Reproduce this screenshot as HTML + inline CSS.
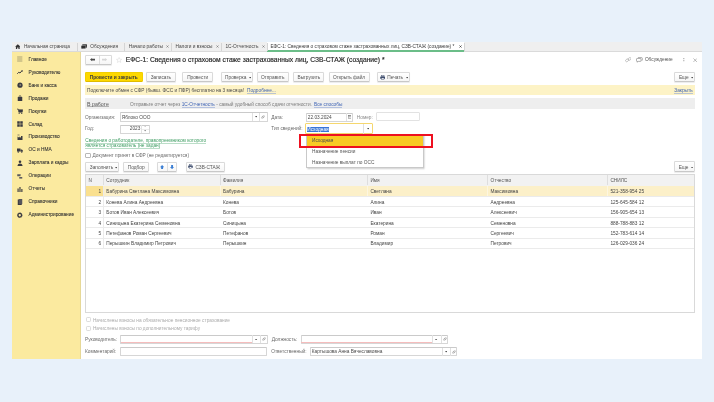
<!DOCTYPE html>
<html><head><meta charset="utf-8">
<style>
html,body{margin:0;padding:0}
body{width:714px;height:402px;overflow:hidden;background:#e8f1fa;position:relative;font-family:"Liberation Sans",sans-serif;color:#4a4a4a}
#root{position:absolute;left:0;top:0;width:714px;height:402px;will-change:transform}
.a{position:absolute}
.t{position:absolute;white-space:pre;font-size:4.78px;-webkit-text-stroke:0px}
.btn{position:absolute;box-sizing:border-box;border:0.7px solid #dadada;border-bottom-color:#c8c8c8;border-radius:1.2px;background:linear-gradient(#fff,#f6f6f6);box-shadow:0 0.6px 0.8px rgba(0,0,0,0.08)}
.inp{position:absolute;box-sizing:border-box;border:0.7px solid #d6d6d6;border-top-color:#cacaca;border-radius:1px;background:#fff}
</style></head><body><div id="root">
<div class="a" style="left:12.00px;top:42.00px;width:690.00px;height:317.20px;background:#fff;"></div>
<div class="a" style="left:12.00px;top:42.00px;width:690.00px;height:9.10px;background:#efefef;"></div>
<div class="a" style="left:12.00px;top:51.10px;width:690.00px;height:1.00px;background:#dadada;"></div>
<div class="a" style="left:267.40px;top:42.00px;width:196.90px;height:9.10px;background:#fff;"></div>
<div class="a" style="left:267.40px;top:50.00px;width:196.40px;height:1.60px;background:#6bbd88;"></div>
<div class="a" style="left:76.90px;top:43.00px;width:0.70px;height:8.00px;background:#d4d4d4;"></div>
<div class="a" style="left:124.20px;top:43.00px;width:0.70px;height:8.00px;background:#d4d4d4;"></div>
<div class="a" style="left:171.00px;top:43.00px;width:0.70px;height:8.00px;background:#d4d4d4;"></div>
<div class="a" style="left:221.00px;top:43.00px;width:0.70px;height:8.00px;background:#d4d4d4;"></div>
<div class="a" style="left:267.00px;top:43.00px;width:0.70px;height:8.00px;background:#d4d4d4;"></div>
<div class="a" style="left:463.80px;top:43.00px;width:0.70px;height:8.00px;background:#d4d4d4;"></div>
<svg class="a" style="left:14.80px;top:43.90px" width="5.6" height="5.2" viewBox="0 0 12 11"><path d="M6 0.3 L11.8 5.6 L10 5.6 L10 10.8 L7.3 10.8 L7.3 7.2 L4.7 7.2 L4.7 10.8 L2 10.8 L2 5.6 L0.2 5.6 Z" fill="#333"/></svg>
<div class="t" style="left:23.90px;top:43.00px;font-size:4.78px;line-height:8px;height:8px;color:#444;">Начальная страница</div>
<svg class="a" style="left:80.90px;top:43.70px" width="6.2" height="5.4" viewBox="0 0 12 10.5"><path d="M3.5 0.5 H10.5 Q11.8 0.5 11.8 1.8 V5.5 Q11.8 6.8 10.5 6.8 L10.8 8.2 L8.8 6.8 H3.5 Q2.2 6.8 2.2 5.5 V1.8 Q2.2 0.5 3.5 0.5 Z" fill="#3a3a3a"/><path d="M1.5 2.8 H8 Q9.3 2.8 9.3 4.1 V7.8 Q9.3 9.1 8 9.1 H3.2 L1.2 10.4 L1.5 9.1 Q0.2 9.1 0.2 7.8 V4.1 Q0.2 2.8 1.5 2.8 Z" fill="#2e2e2e" stroke="#efefef" stroke-width="0.7"/></svg>
<div class="t" style="left:90.30px;top:43.00px;font-size:4.78px;line-height:8px;height:8px;color:#444;">Обсуждения</div>
<div class="t" style="left:128.70px;top:43.00px;font-size:4.78px;line-height:8px;height:8px;color:#444;">Начало работы</div>
<svg class="a" style="left:166.30px;top:45.20px" width="3.0" height="3.0" viewBox="0 0 10 10"><path d="M1.5 1.5 L8.5 8.5 M8.5 1.5 L1.5 8.5" stroke="#666" stroke-width="1.9"/></svg>
<div class="t" style="left:175.50px;top:43.00px;font-size:4.78px;line-height:8px;height:8px;color:#444;">Налоги и взносы</div>
<svg class="a" style="left:215.70px;top:45.20px" width="3.0" height="3.0" viewBox="0 0 10 10"><path d="M1.5 1.5 L8.5 8.5 M8.5 1.5 L1.5 8.5" stroke="#666" stroke-width="1.9"/></svg>
<div class="t" style="left:225.40px;top:43.00px;font-size:4.78px;line-height:8px;height:8px;color:#444;">1С-Отчетность</div>
<svg class="a" style="left:261.50px;top:45.20px" width="3.0" height="3.0" viewBox="0 0 10 10"><path d="M1.5 1.5 L8.5 8.5 M8.5 1.5 L1.5 8.5" stroke="#666" stroke-width="1.9"/></svg>
<div class="t" style="left:270.40px;top:43.00px;font-size:4.78px;line-height:8px;height:8px;color:#3a3a3a;">ЕФС-1: Сведения о страховом стаже застрахованных лиц, СЗВ-СТАЖ (создание) *</div>
<svg class="a" style="left:459.00px;top:45.20px" width="3.0" height="3.0" viewBox="0 0 10 10"><path d="M1.5 1.5 L8.5 8.5 M8.5 1.5 L1.5 8.5" stroke="#333" stroke-width="2.3"/></svg>
<div class="a" style="left:12.00px;top:52.10px;width:68.50px;height:307.10px;background:#fbea9f;"></div>
<div class="a" style="left:80.30px;top:52.10px;width:0.80px;height:307.10px;background:#e6d897;"></div>
<div class="t" style="left:28.60px;top:55.80px;font-size:4.78px;line-height:8px;height:8px;color:#333;-webkit-text-stroke:0.08px #333;">Главное</div>
<svg class="a" style="left:17.00px;top:56.30px" width="6" height="6" viewBox="0 0 12 12"><rect x="0.3" y="0" width="10.4" height="12" fill="#d3c68a"/></svg>
<div class="t" style="left:28.60px;top:68.74px;font-size:4.78px;line-height:8px;height:8px;color:#333;-webkit-text-stroke:0.08px #333;">Руководителю</div>
<svg class="a" style="left:17.00px;top:69.24px" width="6" height="6" viewBox="0 0 12 12"><path d="M0.5 9.5 L3.5 6.5 L6 8 L9.5 4 " fill="none" stroke="#3a3a42" stroke-width="2"/><path d="M8 2.5 L11.5 2.5 L11.5 6 Z" fill="#3a3a42"/></svg>
<div class="t" style="left:28.60px;top:81.68px;font-size:4.78px;line-height:8px;height:8px;color:#333;-webkit-text-stroke:0.08px #333;">Банк и касса</div>
<svg class="a" style="left:17.00px;top:82.18px" width="6" height="6" viewBox="0 0 12 12"><circle cx="6" cy="6.3" r="5.2" fill="#3a3a42"/><circle cx="6.5" cy="5.8" r="2" fill="#8a8570"/></svg>
<div class="t" style="left:28.60px;top:94.62px;font-size:4.78px;line-height:8px;height:8px;color:#333;-webkit-text-stroke:0.08px #333;">Продажи</div>
<svg class="a" style="left:17.00px;top:95.12px" width="6" height="6" viewBox="0 0 12 12"><path d="M4 4 Q4 1 6 1 Q8 1 8 4" fill="none" stroke="#3a3a42" stroke-width="1.3"/><rect x="1.5" y="4" width="9" height="8" fill="#3a3a42"/></svg>
<div class="t" style="left:28.60px;top:107.56px;font-size:4.78px;line-height:8px;height:8px;color:#333;-webkit-text-stroke:0.08px #333;">Покупки</div>
<svg class="a" style="left:17.00px;top:108.06px" width="6" height="6" viewBox="0 0 12 12"><path d="M0 2 L2.5 2 L3.5 8.5 L10.5 8.5 L11.5 3.5 L3 3.5" fill="#3a3a42" stroke="#3a3a42" stroke-width="1.2"/><circle cx="4.3" cy="10.8" r="1.1" fill="#3a3a42"/><circle cx="9.5" cy="10.8" r="1.1" fill="#3a3a42"/></svg>
<div class="t" style="left:28.60px;top:120.50px;font-size:4.78px;line-height:8px;height:8px;color:#333;-webkit-text-stroke:0.08px #333;">Склад</div>
<svg class="a" style="left:17.00px;top:121.00px" width="6" height="6" viewBox="0 0 12 12"><rect x="0.5" y="0.5" width="5" height="5" fill="#3a3a42"/><rect x="6.5" y="0.5" width="5" height="5" fill="#3a3a42"/><rect x="0.5" y="6.5" width="5" height="5" fill="#3a3a42"/><rect x="6.5" y="6.5" width="5" height="5" fill="#3a3a42"/></svg>
<div class="t" style="left:28.60px;top:133.44px;font-size:4.78px;line-height:8px;height:8px;color:#333;-webkit-text-stroke:0.08px #333;">Производство</div>
<svg class="a" style="left:17.00px;top:133.94px" width="6" height="6" viewBox="0 0 12 12"><path d="M1 12 L1 5 L4.5 7.5 L4.5 5 L8 7.5 L8 4 L11 4 L11 12 Z" fill="#3a3a42"/><path d="M1 2 L5 2" stroke="#3a3a42" stroke-width="1.2"/></svg>
<div class="t" style="left:28.60px;top:146.38px;font-size:4.78px;line-height:8px;height:8px;color:#333;-webkit-text-stroke:0.08px #333;">ОС и НМА</div>
<svg class="a" style="left:17.00px;top:146.88px" width="6" height="6" viewBox="0 0 12 12"><rect x="0" y="3" width="7" height="6" fill="#3a3a42"/><path d="M7 5 L10 5 L12 7.5 L12 9 L7 9 Z" fill="#3a3a42"/><circle cx="2.5" cy="10" r="1.5" fill="#3a3a42"/><circle cx="9.5" cy="10" r="1.5" fill="#3a3a42"/></svg>
<div class="t" style="left:28.60px;top:159.32px;font-size:4.78px;line-height:8px;height:8px;color:#333;-webkit-text-stroke:0.08px #333;">Зарплата и кадры</div>
<svg class="a" style="left:17.00px;top:159.82px" width="6" height="6" viewBox="0 0 12 12"><circle cx="6" cy="3.5" r="2.6" fill="#3a3a42"/><path d="M1 12 Q1 6.8 6 6.8 Q11 6.8 11 12 Z" fill="#3a3a42"/></svg>
<div class="t" style="left:28.60px;top:172.26px;font-size:4.78px;line-height:8px;height:8px;color:#333;-webkit-text-stroke:0.08px #333;">Операции</div>
<svg class="a" style="left:17.00px;top:172.76px" width="6" height="6" viewBox="0 0 12 12"><path d="M0.5 2.5 L7.5 2.5 L6.8 6.5 L0.5 6.5 Z" fill="#5a5a5e"/><rect x="4.5" y="8" width="6" height="3.2" fill="#5a5a5e"/></svg>
<div class="t" style="left:28.60px;top:185.20px;font-size:4.78px;line-height:8px;height:8px;color:#333;-webkit-text-stroke:0.08px #333;">Отчеты</div>
<svg class="a" style="left:17.00px;top:185.70px" width="6" height="6" viewBox="0 0 12 12"><rect x="1" y="5" width="2.3" height="7" fill="#3a3a42"/><rect x="4.8" y="2" width="2.3" height="10" fill="#3a3a42"/><rect x="8.6" y="6" width="2.3" height="6" fill="#3a3a42"/></svg>
<div class="t" style="left:28.60px;top:198.14px;font-size:4.78px;line-height:8px;height:8px;color:#333;-webkit-text-stroke:0.08px #333;">Справочники</div>
<svg class="a" style="left:17.00px;top:198.64px" width="6" height="6" viewBox="0 0 12 12"><rect x="1.5" y="1" width="8" height="11" fill="#3a3a42"/><rect x="3.5" y="0" width="7" height="10" fill="#55555c"/></svg>
<div class="t" style="left:28.60px;top:211.08px;font-size:4.78px;line-height:8px;height:8px;color:#333;-webkit-text-stroke:0.08px #333;">Администрирование</div>
<svg class="a" style="left:17.00px;top:211.58px" width="6" height="6" viewBox="0 0 12 12"><circle cx="5.5" cy="6.5" r="3.6" fill="none" stroke="#3a3a42" stroke-width="2.6"/><circle cx="5.5" cy="6.5" r="5" fill="none" stroke="#3a3a42" stroke-width="1.2" stroke-dasharray="1.8 1.6"/></svg>
<div class="btn" style="left:85.20px;top:55.40px;width:26.60px;height:9.20px;"></div>
<div class="a" style="left:98.60px;top:55.80px;width:0.70px;height:8.20px;background:#dedede;"></div>
<svg class="a" style="left:89.50px;top:58.40px" width="5.2" height="3.2" viewBox="0 0 10 6"><path d="M0 3 L4 0 L4 1.3 L10 1.3 L10 4.7 L4 4.7 L4 6 Z" fill="#4a4a4a"/></svg>
<svg class="a" style="left:102.00px;top:58.40px" width="5.2" height="3.2" viewBox="0 0 10 6"><path d="M10 3 L6 0 L6 1.3 L0 1.3 L0 4.7 L6 4.7 L6 6 Z" fill="#d6d6d6"/></svg>
<svg class="a" style="left:116.20px;top:56.90px" width="6.2" height="6.2" viewBox="0 0 20 20"><path d="M10 1.5 L12.5 7.2 L18.6 7.6 L13.9 11.6 L15.4 17.6 L10 14.3 L4.6 17.6 L6.1 11.6 L1.4 7.6 L7.5 7.2 Z" fill="none" stroke="#cfcfcf" stroke-width="1.3"/></svg>
<div class="t" style="left:125.80px;top:55.10px;font-size:6.71px;line-height:10px;height:10px;color:#2a2a2a;-webkit-text-stroke:0.18px #2a2a2a;">ЕФС-1: Сведения о страховом стаже застрахованных лиц, СЗВ-СТАЖ (создание) *</div>
<svg class="a" style="left:624.50px;top:57.40px" width="6.8" height="5.4" viewBox="0 0 14 11"><rect x="1" y="4.6" width="6.5" height="4.6" rx="2.3" transform="rotate(-35 4.2 6.9)" fill="none" stroke="#a8a8a8" stroke-width="1.3"/><rect x="6.2" y="1.6" width="6.5" height="4.6" rx="2.3" transform="rotate(-35 9.5 3.9)" fill="none" stroke="#a8a8a8" stroke-width="1.3"/></svg>
<svg class="a" style="left:636.40px;top:57.40px" width="6.8" height="5.4" viewBox="0 0 14 11"><path d="M4 1.2 H11.5 Q13 1.2 13 2.7 V6 Q13 7.3 11.8 7.4" fill="none" stroke="#777" stroke-width="1.2"/><path d="M1 4.2 Q1 3 2.3 3 H9 Q10.3 3 10.3 4.2 V7.8 Q10.3 9 9 9 H4.5 L2.2 10.6 L2.6 9 Q1 9 1 7.8 Z" fill="#fff" stroke="#777" stroke-width="1.2"/></svg>
<div class="t" style="left:644.90px;top:56.30px;font-size:4.78px;line-height:8px;height:8px;color:#555;">Обсуждение</div>
<svg class="a" style="left:683.20px;top:57.70px" width="1.6" height="4.8" viewBox="0 0 2 6"><rect x="0.3" y="0" width="1.4" height="1.3" fill="#aaa"/><rect x="0.3" y="2.35" width="1.4" height="1.3" fill="#aaa"/><rect x="0.3" y="4.7" width="1.4" height="1.3" fill="#aaa"/></svg>
<svg class="a" style="left:692.60px;top:57.60px" width="4.4" height="4.4" viewBox="0 0 10 10"><path d="M1 1 L9 9 M9 1 L1 9" stroke="#8a8a8a" stroke-width="1.3"/></svg>
<div class="btn" style="left:85.00px;top:72.00px;width:57.60px;height:9.80px;background:#fdd800;border-color:#f2cf00;border-bottom-color:#dfbb00;box-shadow:none;"></div>
<div class="t" style="left:89.70px;top:73.70px;font-size:4.8px;line-height:8px;height:8px;color:#3a3a3a;font-weight:bold;">Провести и закрыть</div>
<div class="btn" style="left:146.20px;top:72.00px;width:29.40px;height:9.80px;"></div>
<div class="t" style="left:146.20px;width:29.40px;text-align:center;top:73.80px;line-height:8px;height:8px;color:#555;">Записать</div>
<div class="btn" style="left:182.40px;top:72.00px;width:30.60px;height:9.80px;"></div>
<div class="t" style="left:182.40px;width:30.60px;text-align:center;top:73.80px;line-height:8px;height:8px;color:#555;">Провести</div>
<div class="btn" style="left:220.60px;top:72.00px;width:32.50px;height:9.80px;"></div>
<div class="t" style="left:225.10px;top:73.80px;font-size:4.78px;line-height:8px;height:8px;color:#555;">Проверка</div>
<svg class="a" style="left:248.90px;top:77.00px" width="2.2" height="1.6" viewBox="0 0 4 3"><path d="M0 0 H4 L2 3 Z" fill="#555"/></svg>
<div class="btn" style="left:256.80px;top:72.00px;width:31.80px;height:9.80px;"></div>
<div class="t" style="left:256.80px;width:31.80px;text-align:center;top:73.80px;line-height:8px;height:8px;color:#555;">Отправить</div>
<div class="btn" style="left:293.40px;top:72.00px;width:31.00px;height:9.80px;"></div>
<div class="t" style="left:293.40px;width:31.00px;text-align:center;top:73.80px;line-height:8px;height:8px;color:#555;">Выгрузить</div>
<div class="btn" style="left:328.50px;top:72.00px;width:41.10px;height:9.80px;"></div>
<div class="t" style="left:328.50px;width:41.10px;text-align:center;top:73.80px;line-height:8px;height:8px;color:#555;">Открыть файл</div>
<div class="btn" style="left:377.40px;top:72.00px;width:32.30px;height:9.80px;"></div>
<div class="t" style="left:387.30px;top:73.80px;font-size:4.78px;line-height:8px;height:8px;color:#555;">Печать</div>
<svg class="a" style="left:405.80px;top:77.00px" width="2.2" height="1.6" viewBox="0 0 4 3"><path d="M0 0 H4 L2 3 Z" fill="#555"/></svg>
<svg class="a" style="left:379.90px;top:74.60px" width="5.4" height="5.0" viewBox="0 0 12 11"><rect x="3" y="0.5" width="6" height="3" fill="none" stroke="#3b4a6b" stroke-width="1"/><path d="M1.5 3.5 H10.5 Q11.5 3.5 11.5 4.5 V8.5 H0.5 V4.5 Q0.5 3.5 1.5 3.5 Z" fill="#3b4a6b"/><rect x="3" y="6.5" width="6" height="4" fill="#fff" stroke="#3b4a6b" stroke-width="1"/></svg>
<div class="btn" style="left:674.10px;top:72.00px;width:21.30px;height:9.80px;"></div>
<div class="t" style="left:678.90px;top:73.80px;font-size:4.78px;line-height:8px;height:8px;color:#555;">Еще</div>
<svg class="a" style="left:690.80px;top:77.00px" width="2.2" height="1.6" viewBox="0 0 4 3"><path d="M0 0 H4 L2 3 Z" fill="#555"/></svg>
<div class="a" style="left:85.00px;top:85.00px;width:610.40px;height:9.90px;background:#fdf3c6;"></div>
<div class="t" style="left:87.00px;top:86.50px;font-size:4.78px;line-height:8px;height:8px;color:#4a4a4a;">Подключите обмен с СФР (бывш. ФСС и ПФР) бесплатно на 3 месяца! </div>
<div class="t" style="left:247.10px;top:86.50px;font-size:4.78px;line-height:8px;height:8px;color:#3e63b4;background:linear-gradient(#8da3d6,#8da3d6) 0 6.11px/100% 0.6px no-repeat;">Подробнее...</div>
<div class="t" style="left:674.30px;top:86.50px;font-size:4.78px;line-height:8px;height:8px;color:#3e63b4;background:linear-gradient(#8da3d6,#8da3d6) 0 6.11px/100% 0.6px no-repeat;">Закрыть</div>
<div class="a" style="left:85.00px;top:98.30px;width:610.40px;height:10.60px;background:#eeeeee;"></div>
<div class="t" style="left:87.00px;top:99.90px;font-size:5.26px;line-height:8px;height:8px;color:#555;background:linear-gradient(#888,#888) 0 6.27px/100% 0.6px no-repeat;">В работе</div>
<div class="t" style="left:130.00px;top:100.60px;font-size:4.78px;line-height:8px;height:8px;color:#7a7a7a;">Отправьте отчет через </div>
<div class="t" style="left:181.70px;top:100.60px;font-size:4.78px;line-height:8px;height:8px;color:#3e63b4;background:linear-gradient(#8da3d6,#8da3d6) 0 6.11px/100% 0.6px no-repeat;">1С-Отчетность</div>
<div class="t" style="left:214.90px;top:100.60px;font-size:4.78px;line-height:8px;height:8px;color:#7a7a7a;"> - самый удобный способ сдачи отчетности. </div>
<div class="t" style="left:314.00px;top:100.60px;font-size:4.78px;line-height:8px;height:8px;color:#3e63b4;background:linear-gradient(#8da3d6,#8da3d6) 0 6.11px/100% 0.6px no-repeat;">Все способы</div>
<div class="t" style="left:85.10px;top:113.50px;font-size:4.78px;line-height:8px;height:8px;color:#6a6a6a;">Организация:</div>
<div class="inp" style="left:119.60px;top:112.20px;width:148.00px;height:9.40px;"></div>
<div class="a" style="left:252.30px;top:112.60px;width:0.70px;height:8.60px;background:#e0e0e0;"></div>
<svg class="a" style="left:254.80px;top:116.20px" width="2.2" height="1.6" viewBox="0 0 4 3"><path d="M0 0 H4 L2 3 Z" fill="#555"/></svg>
<div class="a" style="left:259.30px;top:112.60px;width:0.70px;height:8.60px;background:#e0e0e0;"></div>
<svg class="a" style="left:261.45px;top:114.90px" width="4" height="4" viewBox="0 0 10 10"><rect x="0.8" y="4.2" width="5.6" height="3.6" rx="1.8" transform="rotate(-45 3.6 6)" fill="none" stroke="#8a8a8a" stroke-width="1.2"/><rect x="3.6" y="2.2" width="5.6" height="3.6" rx="1.8" transform="rotate(-45 6.4 4)" fill="none" stroke="#8a8a8a" stroke-width="1.2"/></svg>
<div class="t" style="left:121.70px;top:113.50px;font-size:4.78px;line-height:8px;height:8px;color:#4a4a4a;">Яблоко ООО</div>
<div class="t" style="left:271.20px;top:113.50px;font-size:4.78px;line-height:8px;height:8px;color:#6a6a6a;">Дата:</div>
<div class="inp" style="left:306.20px;top:112.60px;width:46.80px;height:9.10px;"></div>
<div class="t" style="left:307.80px;top:113.60px;font-size:4.78px;line-height:8px;height:8px;color:#4a4a4a;">22.03.2024</div>
<div class="a" style="left:345.60px;top:113.20px;width:0.60px;height:7.90px;background:#e2e2e2;"></div>
<svg class="a" style="left:347.60px;top:115.30px" width="3.6" height="3.6" viewBox="0 0 10 10"><rect x="1" y="1.5" width="8" height="7.5" fill="none" stroke="#666" stroke-width="1.2"/><rect x="1" y="1.5" width="8" height="2.2" fill="#666"/><rect x="3" y="5" width="1.5" height="1.5" fill="#666"/><rect x="5.5" y="5" width="1.5" height="1.5" fill="#666"/></svg>
<div class="t" style="left:356.80px;top:113.50px;font-size:4.78px;line-height:8px;height:8px;color:#8a8a8a;">Номер:</div>
<div class="inp" style="left:376.40px;top:112.30px;width:43.80px;height:9.20px;border-color:#e2e2e2;"></div>
<div class="t" style="left:85.10px;top:125.30px;font-size:4.78px;line-height:8px;height:8px;color:#6a6a6a;">Год:</div>
<div class="inp" style="left:120.00px;top:124.50px;width:29.60px;height:9.00px;"></div>
<div class="t" style="left:120.00px;width:20.40px;text-align:right;top:125.10px;line-height:8px;height:8px;color:#4a4a4a;">2023</div>
<div class="a" style="left:141.40px;top:125.00px;width:0.60px;height:8.00px;background:#e2e2e2;"></div>
<div class="a" style="left:141.80px;top:128.90px;width:7.40px;height:0.60px;background:#ececec;"></div>
<svg class="a" style="left:144.30px;top:125.80px" width="2.2" height="1.6" viewBox="0 0 4 3"><path d="M0 3 H4 L2 0 Z" fill="#999"/></svg>
<svg class="a" style="left:144.30px;top:130.40px" width="2.2" height="1.6" viewBox="0 0 4 3"><path d="M0 0 H4 L2 3 Z" fill="#999"/></svg>
<div class="t" style="left:271.20px;top:125.40px;font-size:4.78px;line-height:8px;height:8px;color:#6a6a6a;">Тип сведений:</div>
<div class="inp" style="left:305.10px;top:123.30px;width:67.50px;height:10.80px;border-color:#f5d76e;"></div>
<div class="a" style="left:307.10px;top:126.50px;width:22.00px;height:5.70px;background:#3875d7;"></div>
<div class="t" style="left:307.30px;top:125.60px;font-size:4.78px;line-height:8px;height:8px;color:#fff;">Исходная</div>
<div class="a" style="left:363.30px;top:123.70px;width:0.70px;height:10.00px;background:#e0e0e0;"></div>
<svg class="a" style="left:367.00px;top:128.00px" width="2.2" height="1.6" viewBox="0 0 4 3"><path d="M0 0 H4 L2 3 Z" fill="#555"/></svg>
<div class="t" style="left:85.30px;top:136.90px;font-size:4.78px;line-height:8px;height:8px;color:#3f9d63;background:linear-gradient(#8cc7a2,#8cc7a2) 0 6.11px/100% 0.6px no-repeat;">Сведения о работодателе, правопреемником которого</div>
<div class="t" style="left:85.30px;top:142.00px;font-size:4.78px;line-height:8px;height:8px;color:#3f9d63;background:linear-gradient(#8cc7a2,#8cc7a2) 0 6.11px/100% 0.6px no-repeat;">является страхователь (не задан)</div>
<div class="inp" style="left:85.30px;top:152.80px;width:5.30px;height:5.40px;border-color:#b8b8b8;"></div>
<div class="t" style="left:92.60px;top:151.90px;font-size:4.78px;line-height:8px;height:8px;color:#6a6a6a;">Документ принят в СФР (не редактируется)</div>
<div class="btn" style="left:85.10px;top:161.80px;width:34.40px;height:10.10px;"></div>
<div class="t" style="left:89.80px;top:163.75px;font-size:4.78px;line-height:8px;height:8px;color:#555;">Заполнить</div>
<svg class="a" style="left:115.20px;top:166.95px" width="2.2" height="1.6" viewBox="0 0 4 3"><path d="M0 0 H4 L2 3 Z" fill="#555"/></svg>
<div class="btn" style="left:123.20px;top:161.80px;width:26.00px;height:10.10px;"></div>
<div class="t" style="left:123.20px;width:26.00px;text-align:center;top:163.75px;line-height:8px;height:8px;color:#555;">Подбор</div>
<div class="btn" style="left:156.70px;top:161.80px;width:20.80px;height:10.10px;"></div>
<div class="a" style="left:167.20px;top:162.20px;width:0.70px;height:9.30px;background:#dedede;"></div>
<svg class="a" style="left:159.80px;top:164.70px" width="4.2" height="4.2" viewBox="0 0 10 10"><path d="M5 0 L10 5.5 L7.3 5.5 L7.3 10 L2.7 10 L2.7 5.5 L0 5.5 Z" fill="#3b7ed3"/></svg>
<svg class="a" style="left:170.30px;top:164.70px" width="4.2" height="4.2" viewBox="0 0 10 10"><path d="M5 10 L10 4.5 L7.3 4.5 L7.3 0 L2.7 0 L2.7 4.5 L0 4.5 Z" fill="#3b7ed3"/></svg>
<div class="btn" style="left:185.60px;top:161.80px;width:39.40px;height:10.10px;"></div>
<div class="t" style="left:195.40px;top:163.75px;font-size:4.78px;line-height:8px;height:8px;color:#555;">СЗВ-СТАЖ</div>
<svg class="a" style="left:188.10px;top:164.00px" width="5.0" height="4.8" viewBox="0 0 12 11"><rect x="3" y="0.5" width="6" height="3" fill="none" stroke="#3b4a6b" stroke-width="1"/><path d="M1.5 3.5 H10.5 Q11.5 3.5 11.5 4.5 V8.5 H0.5 V4.5 Q0.5 3.5 1.5 3.5 Z" fill="#3b4a6b"/><rect x="3" y="6.5" width="6" height="4" fill="#fff" stroke="#3b4a6b" stroke-width="1"/></svg>
<div class="btn" style="left:673.90px;top:161.30px;width:21.50px;height:10.60px;"></div>
<div class="t" style="left:678.80px;top:163.50px;font-size:4.78px;line-height:8px;height:8px;color:#555;">Еще</div>
<svg class="a" style="left:690.60px;top:166.70px" width="2.2" height="1.6" viewBox="0 0 4 3"><path d="M0 0 H4 L2 3 Z" fill="#555"/></svg>
<div class="a" style="left:85.00px;top:174.20px;width:610.20px;height:138.50px;border:0.7px solid #d9d9d9;box-sizing:border-box;background:#fff;"></div>
<div class="a" style="left:85.70px;top:174.90px;width:608.80px;height:11.00px;background:#f2f2f2;"></div>
<div class="t" style="left:88.40px;top:176.80px;font-size:4.78px;line-height:8px;height:8px;color:#555;">N</div>
<div class="t" style="left:106.30px;top:176.80px;font-size:4.78px;line-height:8px;height:8px;color:#555;">Сотрудник</div>
<div class="t" style="left:223.10px;top:176.80px;font-size:4.78px;line-height:8px;height:8px;color:#555;">Фамилия</div>
<div class="t" style="left:370.40px;top:176.80px;font-size:4.78px;line-height:8px;height:8px;color:#555;">Имя</div>
<div class="t" style="left:490.50px;top:176.80px;font-size:4.78px;line-height:8px;height:8px;color:#555;">Отчество</div>
<div class="t" style="left:610.40px;top:176.80px;font-size:4.78px;line-height:8px;height:8px;color:#555;">СНИЛС</div>
<div class="a" style="left:103.20px;top:174.90px;width:0.60px;height:10.60px;background:#dedede;"></div>
<div class="a" style="left:220.30px;top:174.90px;width:0.60px;height:10.60px;background:#dedede;"></div>
<div class="a" style="left:367.30px;top:174.90px;width:0.60px;height:10.60px;background:#dedede;"></div>
<div class="a" style="left:487.00px;top:174.90px;width:0.60px;height:10.60px;background:#dedede;"></div>
<div class="a" style="left:607.30px;top:174.90px;width:0.60px;height:10.60px;background:#dedede;"></div>
<div class="a" style="left:85.70px;top:185.90px;width:608.80px;height:10.44px;background:#fcf0c9;"></div>
<div class="a" style="left:85.70px;top:185.90px;width:17.50px;height:10.44px;background:#fae08f;"></div>
<div class="a" style="left:220.30px;top:185.90px;width:0.70px;height:10.44px;background:#fdf6e0;"></div>
<div class="a" style="left:367.30px;top:185.90px;width:0.70px;height:10.44px;background:#fdf6e0;"></div>
<div class="a" style="left:487.00px;top:185.90px;width:0.70px;height:10.44px;background:#fdf6e0;"></div>
<div class="a" style="left:607.30px;top:185.90px;width:0.70px;height:10.44px;background:#fdf6e0;"></div>
<div class="a" style="left:85.70px;top:195.74px;width:608.80px;height:0.60px;background:#ebebeb;"></div>
<div class="a" style="left:103.20px;top:185.90px;width:0.60px;height:10.44px;background:#ebebeb;"></div>
<div class="t" style="left:86.00px;width:15.20px;text-align:right;top:188.22px;line-height:8px;height:8px;color:#444;">1</div>
<div class="t" style="left:106.30px;top:188.22px;font-size:4.78px;line-height:8px;height:8px;color:#444;">Бабурина Светлана Максимовна</div>
<div class="t" style="left:223.10px;top:188.22px;font-size:4.78px;line-height:8px;height:8px;color:#444;">Бабурина</div>
<div class="t" style="left:370.40px;top:188.22px;font-size:4.78px;line-height:8px;height:8px;color:#444;">Светлана</div>
<div class="t" style="left:490.50px;top:188.22px;font-size:4.78px;line-height:8px;height:8px;color:#444;">Максимовна</div>
<div class="t" style="left:610.40px;top:188.22px;font-size:4.78px;line-height:8px;height:8px;color:#444;">521-358-954 25</div>
<div class="a" style="left:85.70px;top:206.18px;width:608.80px;height:0.60px;background:#ebebeb;"></div>
<div class="a" style="left:103.20px;top:196.34px;width:0.60px;height:10.44px;background:#ebebeb;"></div>
<div class="t" style="left:86.00px;width:15.20px;text-align:right;top:198.66px;line-height:8px;height:8px;color:#444;">2</div>
<div class="t" style="left:106.30px;top:198.66px;font-size:4.78px;line-height:8px;height:8px;color:#444;">Конева Алина Андреевна</div>
<div class="t" style="left:223.10px;top:198.66px;font-size:4.78px;line-height:8px;height:8px;color:#444;">Конева</div>
<div class="t" style="left:370.40px;top:198.66px;font-size:4.78px;line-height:8px;height:8px;color:#444;">Алина</div>
<div class="t" style="left:490.50px;top:198.66px;font-size:4.78px;line-height:8px;height:8px;color:#444;">Андреевна</div>
<div class="t" style="left:610.40px;top:198.66px;font-size:4.78px;line-height:8px;height:8px;color:#444;">125-645-584 12</div>
<div class="a" style="left:85.70px;top:216.62px;width:608.80px;height:0.60px;background:#ebebeb;"></div>
<div class="a" style="left:103.20px;top:206.78px;width:0.60px;height:10.44px;background:#ebebeb;"></div>
<div class="t" style="left:86.00px;width:15.20px;text-align:right;top:209.10px;line-height:8px;height:8px;color:#444;">3</div>
<div class="t" style="left:106.30px;top:209.10px;font-size:4.78px;line-height:8px;height:8px;color:#444;">Ботов Иван Алексеевич</div>
<div class="t" style="left:223.10px;top:209.10px;font-size:4.78px;line-height:8px;height:8px;color:#444;">Ботов</div>
<div class="t" style="left:370.40px;top:209.10px;font-size:4.78px;line-height:8px;height:8px;color:#444;">Иван</div>
<div class="t" style="left:490.50px;top:209.10px;font-size:4.78px;line-height:8px;height:8px;color:#444;">Алексеевич</div>
<div class="t" style="left:610.40px;top:209.10px;font-size:4.78px;line-height:8px;height:8px;color:#444;">156-905-654 13</div>
<div class="a" style="left:85.70px;top:227.06px;width:608.80px;height:0.60px;background:#ebebeb;"></div>
<div class="a" style="left:103.20px;top:217.22px;width:0.60px;height:10.44px;background:#ebebeb;"></div>
<div class="t" style="left:86.00px;width:15.20px;text-align:right;top:219.54px;line-height:8px;height:8px;color:#444;">4</div>
<div class="t" style="left:106.30px;top:219.54px;font-size:4.78px;line-height:8px;height:8px;color:#444;">Синицына Екатерина Семеновна</div>
<div class="t" style="left:223.10px;top:219.54px;font-size:4.78px;line-height:8px;height:8px;color:#444;">Синицына</div>
<div class="t" style="left:370.40px;top:219.54px;font-size:4.78px;line-height:8px;height:8px;color:#444;">Екатерина</div>
<div class="t" style="left:490.50px;top:219.54px;font-size:4.78px;line-height:8px;height:8px;color:#444;">Семеновна</div>
<div class="t" style="left:610.40px;top:219.54px;font-size:4.78px;line-height:8px;height:8px;color:#444;">888-788-883 12</div>
<div class="a" style="left:85.70px;top:237.50px;width:608.80px;height:0.60px;background:#ebebeb;"></div>
<div class="a" style="left:103.20px;top:227.66px;width:0.60px;height:10.44px;background:#ebebeb;"></div>
<div class="t" style="left:86.00px;width:15.20px;text-align:right;top:229.98px;line-height:8px;height:8px;color:#444;">5</div>
<div class="t" style="left:106.30px;top:229.98px;font-size:4.78px;line-height:8px;height:8px;color:#444;">Петефанов Роман Сергеевич</div>
<div class="t" style="left:223.10px;top:229.98px;font-size:4.78px;line-height:8px;height:8px;color:#444;">Петефанов</div>
<div class="t" style="left:370.40px;top:229.98px;font-size:4.78px;line-height:8px;height:8px;color:#444;">Роман</div>
<div class="t" style="left:490.50px;top:229.98px;font-size:4.78px;line-height:8px;height:8px;color:#444;">Сергеевич</div>
<div class="t" style="left:610.40px;top:229.98px;font-size:4.78px;line-height:8px;height:8px;color:#444;">152-783-614 14</div>
<div class="a" style="left:85.70px;top:247.94px;width:608.80px;height:0.60px;background:#ebebeb;"></div>
<div class="a" style="left:103.20px;top:238.10px;width:0.60px;height:10.44px;background:#ebebeb;"></div>
<div class="t" style="left:86.00px;width:15.20px;text-align:right;top:240.42px;line-height:8px;height:8px;color:#444;">6</div>
<div class="t" style="left:106.30px;top:240.42px;font-size:4.78px;line-height:8px;height:8px;color:#444;">Перышкин Владимир Петрович</div>
<div class="t" style="left:223.10px;top:240.42px;font-size:4.78px;line-height:8px;height:8px;color:#444;">Перышкин</div>
<div class="t" style="left:370.40px;top:240.42px;font-size:4.78px;line-height:8px;height:8px;color:#444;">Владимир</div>
<div class="t" style="left:490.50px;top:240.42px;font-size:4.78px;line-height:8px;height:8px;color:#444;">Петрович</div>
<div class="t" style="left:610.40px;top:240.42px;font-size:4.78px;line-height:8px;height:8px;color:#444;">126-029-036 24</div>
<div class="inp" style="left:85.50px;top:317.10px;width:5.40px;height:5.40px;border-color:#dcdcdc;border-radius:1.2px;"></div>
<div class="t" style="left:92.90px;top:316.50px;font-size:4.78px;line-height:8px;height:8px;color:#ababab;">Начислены взносы на обязательное пенсионное страхование</div>
<div class="inp" style="left:85.50px;top:325.90px;width:5.40px;height:5.40px;border-color:#dcdcdc;border-radius:1.2px;"></div>
<div class="t" style="left:92.90px;top:325.20px;font-size:4.78px;line-height:8px;height:8px;color:#ababab;">Начислены взносы по дополнительному тарифу</div>
<div class="t" style="left:85.00px;top:335.50px;font-size:4.78px;line-height:8px;height:8px;color:#6a6a6a;">Руководитель:</div>
<div class="inp" style="left:120.20px;top:335.00px;width:148.20px;height:8.90px;"></div>
<div class="a" style="left:120.90px;top:342.40px;width:130.90px;height:0.70px;background:#f5bcbc;"></div>
<div class="a" style="left:252.40px;top:335.40px;width:0.70px;height:8.10px;background:#e0e0e0;"></div>
<svg class="a" style="left:255.40px;top:338.75px" width="2.2" height="1.6" viewBox="0 0 4 3"><path d="M0 0 H4 L2 3 Z" fill="#555"/></svg>
<div class="a" style="left:260.40px;top:335.40px;width:0.70px;height:8.10px;background:#e0e0e0;"></div>
<svg class="a" style="left:262.40px;top:337.45px" width="4" height="4" viewBox="0 0 10 10"><rect x="0.8" y="4.2" width="5.6" height="3.6" rx="1.8" transform="rotate(-45 3.6 6)" fill="none" stroke="#8a8a8a" stroke-width="1.2"/><rect x="3.6" y="2.2" width="5.6" height="3.6" rx="1.8" transform="rotate(-45 6.4 4)" fill="none" stroke="#8a8a8a" stroke-width="1.2"/></svg>
<div class="t" style="left:271.80px;top:335.50px;font-size:4.78px;line-height:8px;height:8px;color:#6a6a6a;">Должность:</div>
<div class="inp" style="left:300.60px;top:335.00px;width:147.90px;height:8.90px;"></div>
<div class="a" style="left:301.30px;top:342.40px;width:130.40px;height:0.70px;background:#f5bcbc;"></div>
<div class="a" style="left:432.30px;top:335.40px;width:0.70px;height:8.10px;background:#e0e0e0;"></div>
<svg class="a" style="left:435.40px;top:338.75px" width="2.2" height="1.6" viewBox="0 0 4 3"><path d="M0 0 H4 L2 3 Z" fill="#555"/></svg>
<div class="a" style="left:440.50px;top:335.40px;width:0.70px;height:8.10px;background:#e0e0e0;"></div>
<svg class="a" style="left:442.50px;top:337.45px" width="4" height="4" viewBox="0 0 10 10"><rect x="0.8" y="4.2" width="5.6" height="3.6" rx="1.8" transform="rotate(-45 3.6 6)" fill="none" stroke="#8a8a8a" stroke-width="1.2"/><rect x="3.6" y="2.2" width="5.6" height="3.6" rx="1.8" transform="rotate(-45 6.4 4)" fill="none" stroke="#8a8a8a" stroke-width="1.2"/></svg>
<div class="t" style="left:85.00px;top:348.10px;font-size:4.78px;line-height:8px;height:8px;color:#6a6a6a;">Комментарий:</div>
<div class="inp" style="left:120.20px;top:347.20px;width:147.20px;height:9.00px;"></div>
<div class="t" style="left:271.20px;top:348.10px;font-size:4.78px;line-height:8px;height:8px;color:#6a6a6a;">Ответственный:</div>
<div class="inp" style="left:309.90px;top:347.20px;width:147.60px;height:9.00px;"></div>
<div class="a" style="left:442.40px;top:347.60px;width:0.70px;height:8.20px;background:#e0e0e0;"></div>
<svg class="a" style="left:444.95px;top:351.00px" width="2.2" height="1.6" viewBox="0 0 4 3"><path d="M0 0 H4 L2 3 Z" fill="#555"/></svg>
<div class="a" style="left:449.50px;top:347.60px;width:0.70px;height:8.20px;background:#e0e0e0;"></div>
<svg class="a" style="left:451.50px;top:349.70px" width="4" height="4" viewBox="0 0 10 10"><rect x="0.8" y="4.2" width="5.6" height="3.6" rx="1.8" transform="rotate(-45 3.6 6)" fill="none" stroke="#8a8a8a" stroke-width="1.2"/><rect x="3.6" y="2.2" width="5.6" height="3.6" rx="1.8" transform="rotate(-45 6.4 4)" fill="none" stroke="#8a8a8a" stroke-width="1.2"/></svg>
<div class="t" style="left:311.80px;top:348.10px;font-size:4.78px;line-height:8px;height:8px;color:#4a4a4a;">Картышова Анна Вячеславовна</div>
<div class="a" style="left:306.20px;top:134.00px;width:117.80px;height:34.00px;background:#fff;border:0.7px solid #c9c9c9;box-sizing:border-box;box-shadow:0.6px 1px 1.6px rgba(0,0,0,0.22);"></div>
<div class="a" style="left:306.60px;top:135.60px;width:116.70px;height:10.00px;background:#f8ca24;"></div>
<div class="t" style="left:312.00px;top:137.30px;font-size:4.78px;line-height:8px;height:8px;color:#4a4a4a;">Исходная</div>
<div class="t" style="left:312.00px;top:148.40px;font-size:4.78px;line-height:8px;height:8px;color:#555;">Назначение пенсии</div>
<div class="t" style="left:312.00px;top:158.90px;font-size:4.78px;line-height:8px;height:8px;color:#555;">Назначение выплат по ОСС</div>
<div class="a" style="left:299.10px;top:133.70px;width:133.90px;height:14.00px;border:2px solid #ee1020;box-sizing:border-box;"></div>
</div></body></html>
